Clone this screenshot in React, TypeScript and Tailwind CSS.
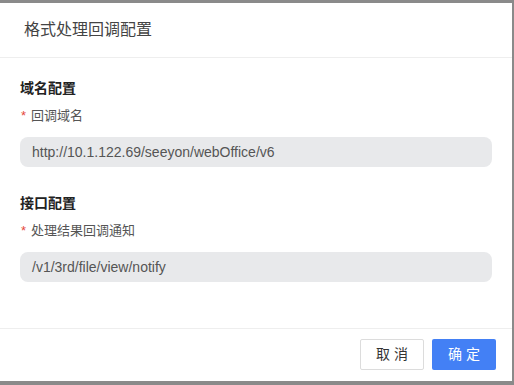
const font = { fontFamily: '"Liberation Sans", "Noto Sans CJK SC", sans-serif' };

function Field({ label, value }: { label: string; value: string }) {
  return (
    <div>
      <div className="flex h-5 items-center text-[13px] leading-5 text-[#555]">
        <span className="mr-[5px] ml-[1px] text-[#e5483a]">*</span>
        <span>{label}</span>
      </div>
      <div className="mt-[11px] flex h-[30px] items-center rounded-lg bg-[#e8e9eb] px-3 text-[14px] text-[#555]">
        {value}
      </div>
    </div>
  );
}

export default function App() {
  return (
    <div className="h-[385px] w-[514px] overflow-hidden bg-[#8a8a8a] pt-[3px]" style={font}>
      <div className="flex h-[378px] w-[512px] flex-col bg-white">
        <header className="flex h-[55px] items-center border-b border-[#eeeeee] px-6 text-[16px] text-[#444]">
          格式处理回调配置
        </header>
        <main className="flex-1 px-5 pt-[20px]">
          <h3 className="h-5 text-[14px] font-bold leading-5 text-[#222]">域名配置</h3>
          <div className="mt-2">
            <Field label="回调域名" value="http://10.1.122.69/seeyon/webOffice/v6" />
          </div>
          <h3 className="mt-[26px] h-5 text-[14px] font-bold leading-5 text-[#222]">接口配置</h3>
          <div className="mt-2">
            <Field label="处理结果回调通知" value="/v1/3rd/file/view/notify" />
          </div>
        </main>
        <footer className="flex h-[53px] items-start justify-end gap-2 border-t border-[#eeeeee] px-4 pt-[10px]">
          <button className="h-[31px] w-16 rounded-[2px] border border-[#dcdcdc] bg-white text-[14px] text-[#333]">
            取 消
          </button>
          <button className="h-[31px] w-16 rounded-[2px] bg-[#4380f5] text-[14px] text-white">
            确 定
          </button>
        </footer>
      </div>
    </div>
  );
}
